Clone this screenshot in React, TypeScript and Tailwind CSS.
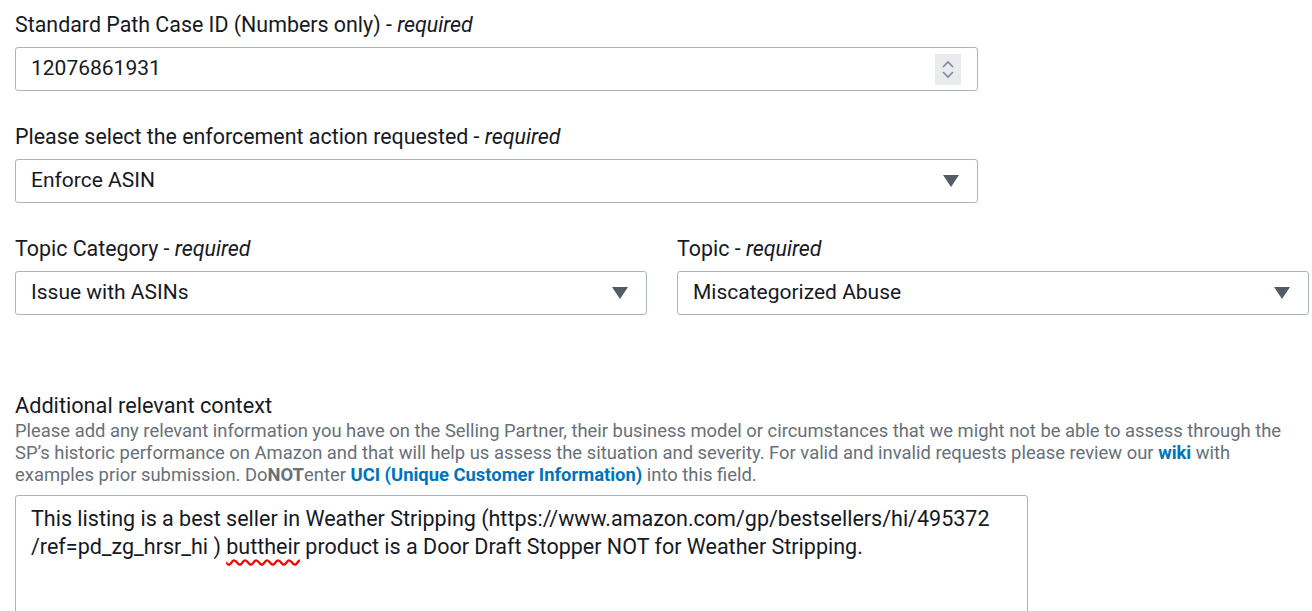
export default function App() {
  return (
    <div className="w-[1312px] h-[611px] overflow-hidden bg-white text-[#16191f] font-['Roboto',sans-serif]">
      <div className="pl-[15px] pt-[12px]">
        <Label text="Standard Path Case ID (Numbers only)" />
        <div className="mt-[9px] w-[963px] h-[44px] flex items-center border border-[#aab7b8] rounded-[3px] pl-[15px] pr-[16px]">
          <span className="text-[21px] flex-1">12076861931</span>
          <div className="w-[26px] h-[31px] bg-[#e9ebed] flex flex-col items-center justify-center gap-[3px]">
            <svg width="12" height="8" viewBox="0 0 12 8">
              <path d="M1 7 L6 2 L11 7" fill="none" stroke="#7d8998" strokeWidth="1.6" />
            </svg>
            <svg width="12" height="8" viewBox="0 0 12 8">
              <path d="M1 1 L6 6 L11 1" fill="none" stroke="#7d8998" strokeWidth="1.6" />
            </svg>
          </div>
        </div>

        <div className="mt-[33px]">
          <Label text="Please select the enforcement action requested" />
        </div>
        <Select className="mt-[9px] w-[963px]" value="Enforce ASIN" />

        <div className="mt-[33px] flex gap-[30px]">
          <div className="w-[632px]">
            <Label text="Topic Category" />
            <Select className="mt-[9px] w-full" value="Issue with ASINs" />
          </div>
          <div className="w-[632px]">
            <Label text="Topic" />
            <Select className="mt-[9px] w-full" value="Miscategorized Abuse" />
          </div>
        </div>

        <div className="mt-[78px] text-[21.7px] leading-[26px]">Additional relevant context</div>
        <p className="mt-[1px] whitespace-nowrap text-[18.4px] leading-[22px] text-[#687078]">
          Please add any relevant information you have on the Selling Partner, their business model or circumstances that we might not be able to assess through the
          <br />
          SP’s historic performance on Amazon and that will help us assess the situation and severity. For valid and invalid requests please review our{' '}
          <a className="font-bold text-[#0073bb]">wiki</a> with
          <br />
          examples prior submission. Do<b>NOT</b>enter{' '}
          <a className="font-bold text-[#0073bb]">UCI (Unique Customer Information)</a> into this field.
        </p>
        <div className="mt-[9px] w-[1013px] h-[140px] border border-[#aab7b8] rounded-[3px] px-[15px] pt-[9px] whitespace-nowrap text-[21.5px] leading-[28px]">
          This listing is a best seller in Weather Stripping (https://www.amazon.com/gp/bestsellers/hi/495372
          <br />
          /ref=pd_zg_hrsr_hi ){' '}
          <span className="underline decoration-wavy decoration-[#ff0000] underline-offset-[5px]">buttheir</span>{' '}
          product is a Door Draft Stopper NOT for Weather Stripping.
        </div>
      </div>
    </div>
  )
}

function Label({ text }: { text: string }) {
  return (
    <div className="text-[21.4px] leading-[26px]">
      {text} - <i>required</i>
    </div>
  )
}

function Select({ value, className }: { value: string; className: string }) {
  return (
    <div className={`${className} h-[44px] flex items-center justify-between border border-[#aab7b8] rounded-[3px] pl-[15px] pr-[18px]`}>
      <span className="text-[21px]">{value}</span>
      <svg width="16" height="12" viewBox="0 0 16 12">
        <path d="M0 0 H16 L8 12 Z" fill="#545b64" />
      </svg>
    </div>
  )
}
